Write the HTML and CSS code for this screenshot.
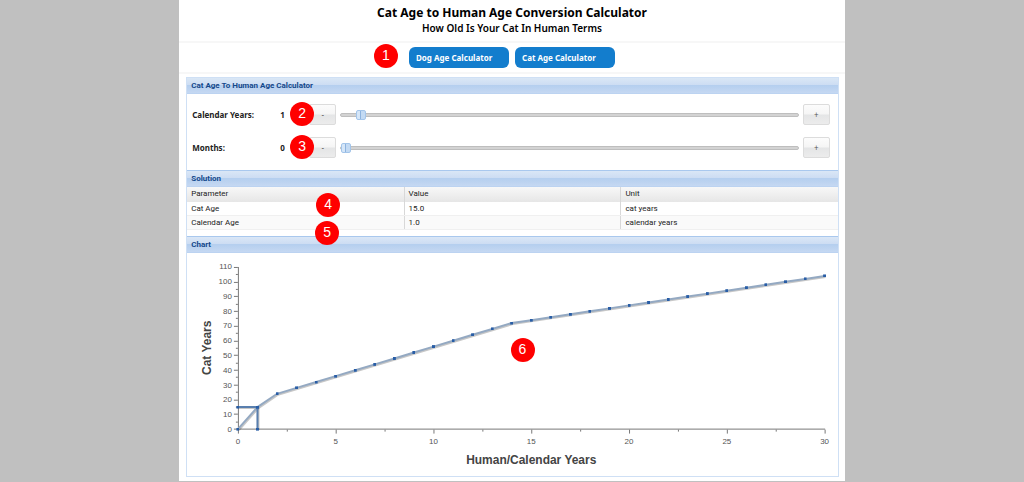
FILE: index.html
```html
<!DOCTYPE html>
<html lang="en">
<head>
<meta charset="utf-8">
<title>Cat Age to Human Age Conversion Calculator</title>
<link rel="stylesheet" href="styles.css">
</head>
<body>
<main class="page">
  <header class="masthead">
    <h1 class="title">Cat Age to Human Age Conversion Calculator</h1>
    <p class="subtitle">How Old Is Your Cat In Human Terms</p>
  </header>
  <nav class="nav">
    <a class="nav-link" href="#dog">Dog Age Calculator</a>
    <a class="nav-link" href="#cat">Cat Age Calculator</a>
    <span class="badge badge-nav">1</span>
  </nav>
  <div class="panel">
    <section>
      <h2 class="bar">Cat Age To Human Age Calculator</h2>
      <div class="controls">
        <div class="control">
          <label class="name" for="years">Calendar Years:</label>
          <output class="amount" for="years">1</output>
          <button class="step" type="button" aria-label="Fewer years">-</button>
          <input class="slider" id="years" type="range" min="0" max="30" value="1">
          <button class="step" type="button" aria-label="More years">+</button>
          <span class="badge badge-control">2</span>
        </div>
        <div class="control">
          <label class="name" for="months">Months:</label>
          <output class="amount" for="months">0</output>
          <button class="step" type="button" aria-label="Fewer months">-</button>
          <input class="slider" id="months" type="range" min="0" max="11" value="0">
          <button class="step" type="button" aria-label="More months">+</button>
          <span class="badge badge-control">3</span>
        </div>
      </div>
    </section>
    <section class="solution">
      <h2 class="bar">Solution</h2>
      <table class="results">
        <thead>
          <tr><th>Parameter</th><th>Value</th><th>Unit</th></tr>
        </thead>
        <tbody>
          <tr><td>Cat Age</td><td>15.0</td><td>cat years</td></tr>
          <tr><td>Calendar Age</td><td>1.0</td><td>calendar years</td></tr>
        </tbody>
      </table>
      <span class="badge badge-cat">4</span>
      <span class="badge badge-calendar">5</span>
    </section>
    <section class="chart-section">
      <h2 class="bar">Chart</h2>
      <svg class="chart" viewBox="0 0 652 223" role="img" aria-label="Cat years by calendar years">
        <defs>
          <marker id="dot" markerUnits="userSpaceOnUse" markerWidth="3" markerHeight="3" refX="1.5" refY="1.5">
            <rect class="dot" width="3" height="3"/>
          </marker>
        </defs>
        <path class="axis" d="M51.5 14V177M51 176.5H639.5
          M47 176.5h4M47 161.5h4M47 147.5h4M47 132.5h4M47 117.5h4M47 102.5h4M47 88.5h4M47 73.5h4M47 58.5h4M47 43.5h4M47 29.5h4M47 14.5h4
          M49 169.5h2M49 154.5h2M49 139.5h2M49 124.5h2M49 110.5h2M49 95.5h2M49 80.5h2M49 65.5h2M49 51.5h2M49 36.5h2M49 21.5h2
          M51.5 177v4M149.5 177v4M247.5 177v4M345.5 177v4M443.5 177v4M541.5 177v4M639.5 177v4
          M100.5 177v2M198.5 177v2M296.5 177v2M394.5 177v2M492.5 177v2M590.5 177v2"/>
        <g class="tick tick-y">
          <text x="45" y="179">0</text><text x="45" y="164">10</text><text x="45" y="149">20</text>
          <text x="45" y="135">30</text><text x="45" y="120">40</text><text x="45" y="105">50</text>
          <text x="45" y="90">60</text><text x="45" y="75">70</text><text x="45" y="61">80</text>
          <text x="45" y="46">90</text><text x="45" y="31">100</text><text x="45" y="16">110</text>
        </g>
        <g class="tick tick-x">
          <text x="51" y="191">0</text><text x="149" y="191">5</text><text x="247" y="191">10</text>
          <text x="345" y="191">15</text><text x="443" y="191">20</text><text x="541" y="191">25</text>
          <text x="639" y="191">30</text>
        </g>
        <text class="axis-title" x="345" y="211">Human/Calendar Years</text>
        <text class="axis-title" transform="translate(24 95) rotate(-90)">Cat Years</text>
        <g class="shadow" transform="translate(1 1)">
          <polyline points="51,176.5 70.6,154.4 90.2,141.1 325.4,70.2 639,23"/>
          <polyline points="51,154.4 70.6,154.4 70.6,176.5"/>
        </g>
        <polyline class="line" points="51,176.5 70.6,154.4 90.2,141.1 109.8,135.2 129.4,129.3 149,123.4 168.6,117.5 188.2,111.6 207.8,105.7 227.4,99.7 247,93.8 266.6,87.9 286.2,82 305.8,76.1 325.4,70.2 345,67.3 364.6,64.3 384.2,61.4 403.8,58.4 423.4,55.5 443,52.5 462.6,49.6 482.2,46.6 501.8,43.7 521.4,40.7 541,37.8 560.6,34.8 580.2,31.9 599.8,28.9 619.4,26 639,23"/>
        <polyline class="line guide" points="51,154.4 70.6,154.4 70.6,176.5"/>
      </svg>
      <span class="badge badge-chart">6</span>
    </section>
  </div>
</main>
</body>
</html>
```
FILE: styles.css
```css
* {
  box-sizing: border-box;
}

body {
  margin: 0;
  background: #c0c0c0;
  color: #222;
  font-family: "Noto Sans", sans-serif;
  font-size: 8px;
}

.page {
  width: 65%;
  margin: 0 auto;
  padding-bottom: 4px;
  background: #fff;
}

.masthead {
  padding: 4px 0 5px;
  border-bottom: 2px solid #f7f7f7;
  color: #000;
  text-align: center;
}

.title,
.subtitle {
  margin: 0;
  font-weight: 700;
}

.title {
  font-size: 12px;
  line-height: 17px;
}

.subtitle {
  font-size: 10px;
  font-weight: 600;
  line-height: 15px;
}

.nav {
  position: relative;
  display: flex;
  justify-content: center;
  gap: 6px;
  padding: 4px 0;
  border-bottom: 2px solid #f7f7f7;
}

.nav-link {
  width: 100px;
  padding: 0 7px;
  border-radius: 6px;
  background: #137dcd;
  color: #fff;
  font-weight: 700;
  line-height: 21px;
  text-decoration: none;
}

.panel {
  margin: 3px 6px 0 7px;
  border: 1px solid #cfe0f5;
}

.bar {
  margin: 0;
  padding: 0 4px;
  border-top: 1px solid #a9c8ee;
  border-bottom: 1px solid #bcd3f1;
  background: linear-gradient(#dae7f6 0, #cdddf3 45%, #b5cfef 50%, #c5d8f2 100%);
  color: #15498b;
  font-family: Roboto, sans-serif;
  font-size: 8px;
  font-weight: 700;
  line-height: 15px;
}

.panel > section:first-child .bar {
  border-top: 0;
}

.controls {
  display: grid;
  gap: 12px;
  padding: 10px 8px 12px 5px;
}

.control {
  position: relative;
  display: grid;
  grid-template-columns: 88px 21px 27px 1fr 27px;
  column-gap: 4px;
  align-items: center;
  font-weight: 700;
}

.amount {
  margin-left: -4px;
}

.step {
  height: 21px;
  padding: 0;
  border: 1px solid #dcdcdc;
  border-radius: 2px;
  background: linear-gradient(#fcfcfc 0, #f5f5f5 48%, #e4e5e6 52%, #ececec 100%);
  color: #555;
  font: inherit;
  font-weight: 400;
}

.slider {
  width: 100%;
  height: 12px;
  margin: 0;
  background: none;
  appearance: none;
}

.slider::-webkit-slider-runnable-track {
  height: 4px;
  border: 1px solid #bebebe;
  border-radius: 2px;
  background: #d3d3d3;
}

.slider::-webkit-slider-thumb {
  width: 10px;
  height: 10px;
  margin-top: -4px;
  border: 1px solid #a3c5ea;
  border-radius: 2px;
  background: linear-gradient(90deg, #d5e6f8 0 38%, #8db3df 38% 50%, #c3daf3 50% 100%);
  appearance: none;
}

.solution,
.chart-section {
  position: relative;
}

.results {
  width: 100%;
  margin-bottom: 6px;
  border-collapse: collapse;
  table-layout: fixed;
  font-family: Roboto, sans-serif;
  line-height: 13px;
}

.results th,
.results td {
  padding: 0 4px;
  border-bottom: 1px solid #f0f0f0;
  font-weight: 400;
  text-align: left;
}

.results th {
  padding-bottom: 2px;
  border-bottom: 0;
}

.results th + th,
.results td + td {
  border-left: 1px solid #d8d8d8;
}

.results thead {
  background: linear-gradient(#f8f8f8, #e6e6e6);
}

.results tbody tr:nth-child(even) {
  background: #fafafa;
}

.chart {
  display: block;
  width: 100%;
  font-family: "Liberation Sans", Arial, sans-serif;
}

.axis {
  fill: none;
  stroke: #777;
}

.tick {
  fill: #555;
  font-size: 8px;
}

.tick-y {
  text-anchor: end;
}

.tick-x,
.axis-title {
  text-anchor: middle;
}

.axis-title {
  fill: #444;
  font-size: 12px;
  font-weight: 700;
}

.dot {
  fill: #285da6;
}

.shadow {
  fill: none;
  stroke: #000;
  stroke-opacity: 0.22;
  stroke-width: 2;
}

.line {
  fill: none;
  stroke: #94a9c2;
  stroke-width: 2;
  marker: url(#dot);
}

.guide {
  stroke: #597fae;
}

.badge {
  position: absolute;
  z-index: 1;
  width: 24px;
  height: 24px;
  border-radius: 50%;
  background: #f00;
  color: #fff;
  font: 14px/23px "Liberation Sans", Arial, sans-serif;
  text-align: center;
}

.badge-nav {
  top: 1px;
  left: calc(50% - 138px);
}

.badge-control {
  top: -2px;
  left: 98px;
}

.badge-cat {
  top: 23px;
  left: 129px;
}

.badge-calendar {
  top: 51px;
  left: 128px;
}

.badge-chart {
  top: 102px;
  left: calc(50% - 2px);
}
```
